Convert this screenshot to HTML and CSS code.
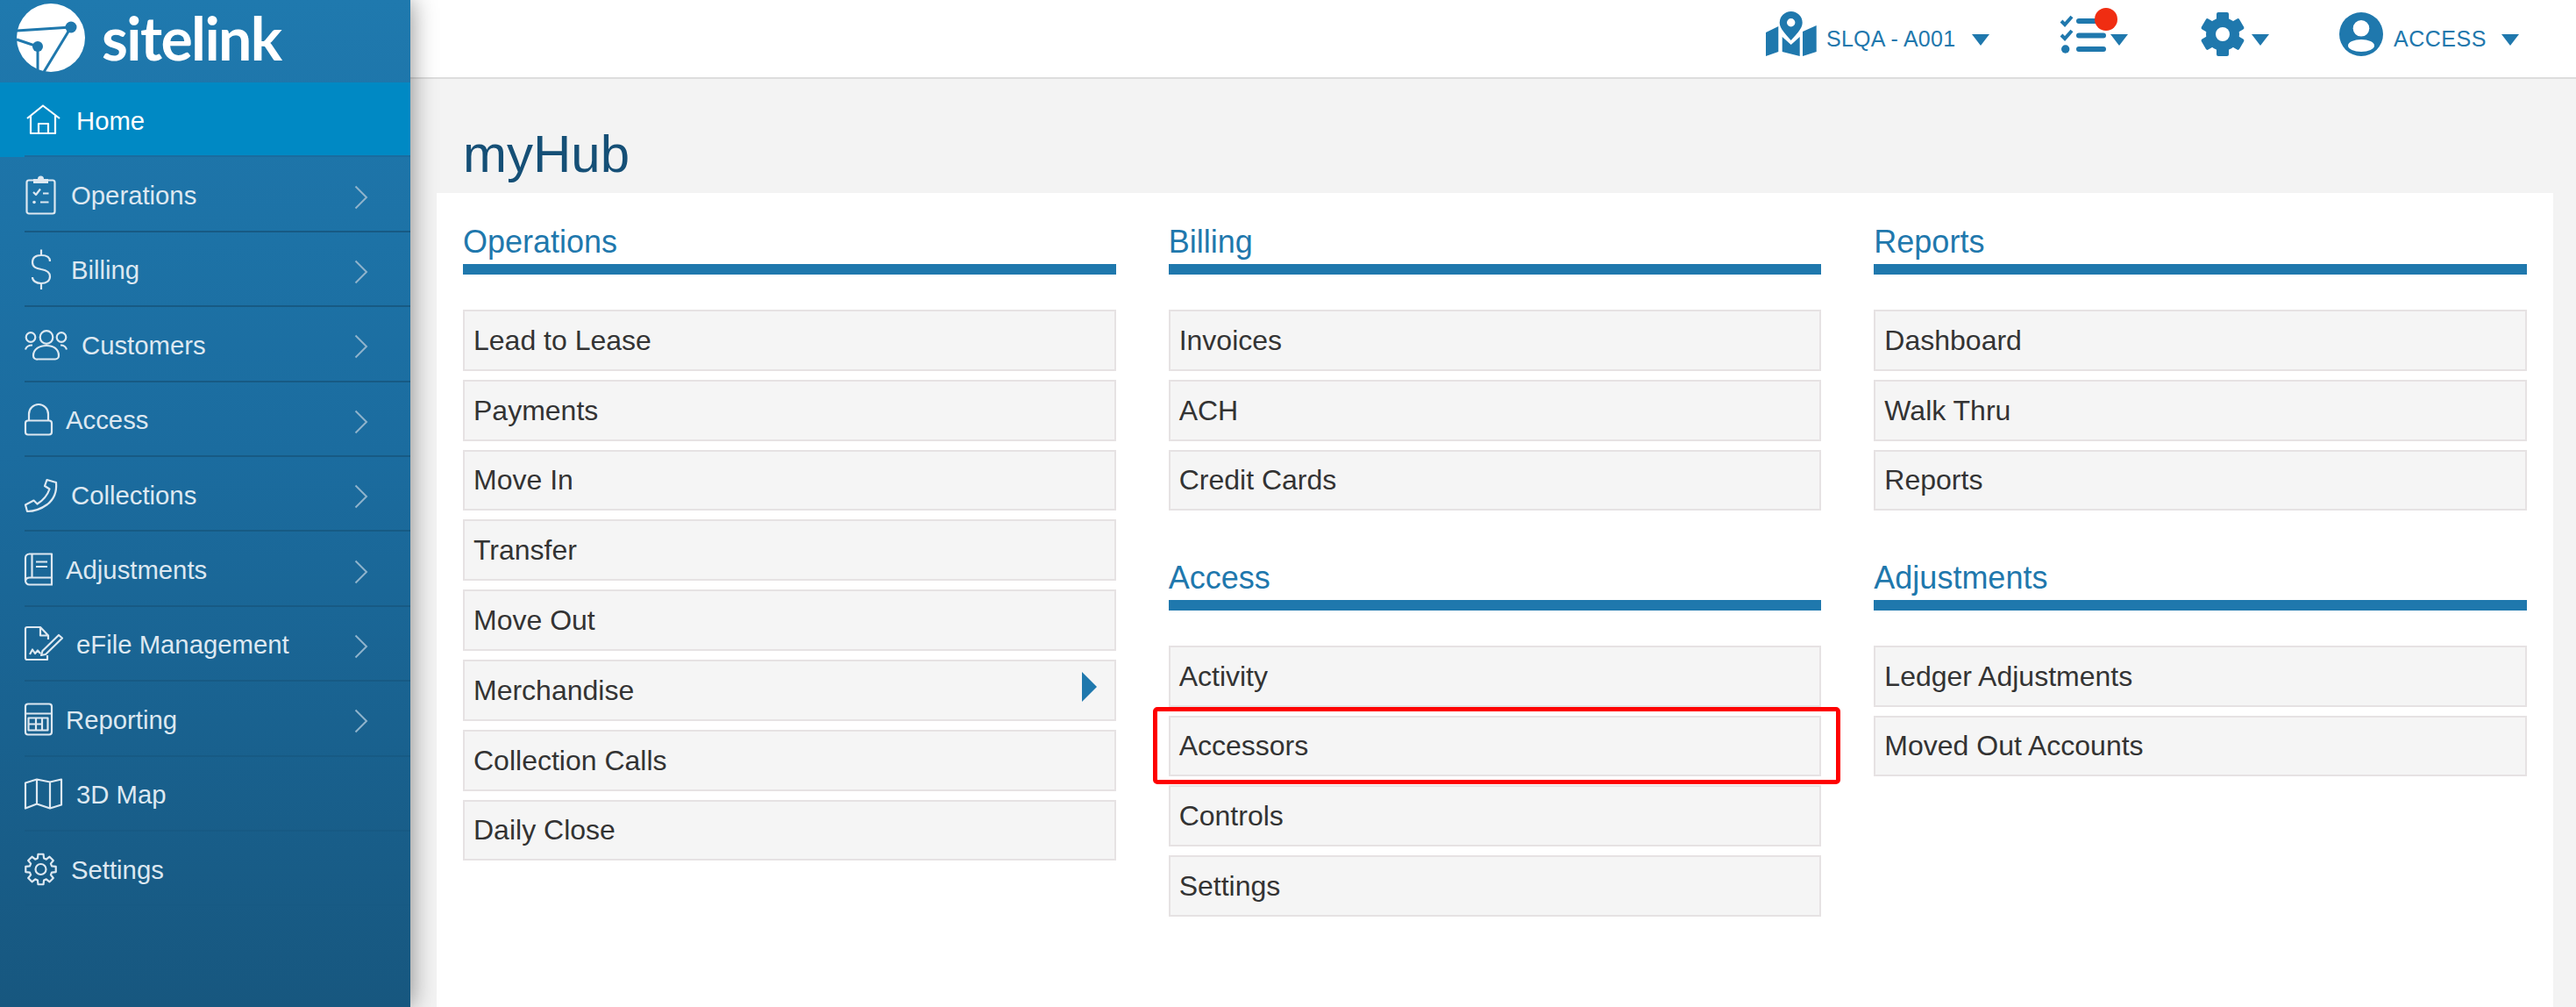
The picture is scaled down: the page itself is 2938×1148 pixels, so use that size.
FILE: index.html
```html
<!DOCTYPE html>
<html lang="en">
<head>
<meta charset="utf-8">
<title>myHub</title>
<link rel="stylesheet" href="styles.css">
</head>
<body>
<div class="app">
  <aside class="sidebar">
    <div class="brand">
      <svg class="brand-mark" width="80" height="80" viewBox="0 0 80 80">
        <circle cx="40" cy="40" r="39" fill="#fff"/>
        <path d="M1 32 L63 28 M63 28 L32 79 M1 42 L25 50 L25 77" fill="none" stroke="#1f78ad" stroke-width="3"/>
        <circle cx="63" cy="28" r="6.5" fill="#1f78ad"/>
        <circle cx="25" cy="50" r="6" fill="#1f78ad"/>
      </svg>
      <span class="brand-name">sitelink</span>
    </div>
    <ul class="nav">
      <li class="nav-item active"><a class="nav-link">
        <span class="nav-icon w59"><svg width="44" height="50" viewBox="0 0 44 50"><path d="M3 24 L21 9.5 L40 24 M7 21 V41 H35 V21 M16 41 V30 H27 V41"/></svg></span>
        <span class="nav-label">Home</span></a></li>
      <li class="nav-item"><a class="nav-link">
        <span class="nav-icon w53"><svg width="40" height="50" viewBox="0 0 40 50"><rect x="2.5" y="9.5" width="32" height="38" rx="2.5"/><path class="solid" d="M10 8 H15 A3.5 3.5 0 0 1 22 8 H27 V13 H10 Z"/><path d="M10 23 L13 26 L18 19.5 M21 24.5 H27.5 M18 34.5 H27.5"/><circle class="solid" cx="11" cy="34.5" r="1.8"/></svg></span>
        <span class="nav-label">Operations</span><svg class="chev" width="16" height="28" viewBox="0 0 16 28"><path d="M1.5 1.5 L14 14 L1.5 26.5"/></svg></a></li>
      <li class="nav-item"><a class="nav-link">
        <span class="nav-icon w53"><svg width="40" height="54" viewBox="0 0 40 54"><path d="M29 19 C29 14 25 12 19 12 C12 12 9 15 9 20 C9 26 14 27 19 28 C25 29 29 31 29 36 C29 41 25 44 19 44 C13 44 9 41 9 37 M19 5.5 V12 M19 44 V51"/></svg></span>
        <span class="nav-label">Billing</span><svg class="chev" width="16" height="28" viewBox="0 0 16 28"><path d="M1.5 1.5 L14 14 L1.5 26.5"/></svg></a></li>
      <li class="nav-item"><a class="nav-link">
        <span class="nav-icon w65"><svg width="50" height="50" viewBox="0 0 50 50"><circle cx="7" cy="17.5" r="5.3"/><circle cx="25" cy="17.5" r="7.3"/><circle cx="42" cy="17.5" r="5.3"/><path d="M15 42.5 H35 A4 4 0 0 0 39 38.5 C39 31 33 27 25 27 C17 27 10 31 10 38.5 A4 4 0 0 0 15 42.5 Z M1 31.5 C2 28 5 26.5 9 26.5 M48 31.5 C47 28 44 26.5 41 26.5"/></svg></span>
        <span class="nav-label">Customers</span><svg class="chev" width="16" height="28" viewBox="0 0 16 28"><path d="M1.5 1.5 L14 14 L1.5 26.5"/></svg></a></li>
      <li class="nav-item"><a class="nav-link">
        <span class="nav-icon w47"><svg width="34" height="50" viewBox="0 0 34 50"><rect x="1" y="27.5" width="30" height="16" rx="3"/><path d="M5 27 V20 A11 11 0 0 1 27 20 V27"/></svg></span>
        <span class="nav-label">Access</span><svg class="chev" width="16" height="28" viewBox="0 0 16 28"><path d="M1.5 1.5 L14 14 L1.5 26.5"/></svg></a></li>
      <li class="nav-item"><a class="nav-link">
        <span class="nav-icon w53"><svg width="40" height="50" viewBox="0 0 40 50"><path d="M25.5 9 L36 12 Q37.5 28 26 37 Q15 45 3 45 L1 37.5 L10.5 32.5 L14.5 36.5 Q25 30 28.5 19.5 L23 16 Z"/></svg></span>
        <span class="nav-label">Collections</span><svg class="chev" width="16" height="28" viewBox="0 0 16 28"><path d="M1.5 1.5 L14 14 L1.5 26.5"/></svg></a></li>
      <li class="nav-item"><a class="nav-link">
        <span class="nav-icon w47"><svg width="34" height="50" viewBox="0 0 34 50"><path d="M32 43.5 H5.5 A4.5 4.5 0 0 1 1 39 V13 A4.5 4.5 0 0 1 5.5 8.5 H31 V35.5 H5.5 A4.5 4.5 0 0 0 1 39 M8.5 8.5 V35.5 M13 17.5 H26 M13 23 H26 M31 35.5 V43"/></svg></span>
        <span class="nav-label">Adjustments</span><svg class="chev" width="16" height="28" viewBox="0 0 16 28"><path d="M1.5 1.5 L14 14 L1.5 26.5"/></svg></a></li>
      <li class="nav-item"><a class="nav-link">
        <span class="nav-icon w59"><svg width="46" height="50" viewBox="0 0 46 50"><path d="M26 39 V44 H3 A2 2 0 0 1 1 42 V9 A2 2 0 0 1 3 7 H18 L27 16.5 V21 M18 7 V16.5 H27 M39 16 L43 19.5 L24 38 L19 39 L20.5 34 Z M6 38 L9 32.5 L12 37 L15 33.5 L18 37"/></svg></span>
        <span class="nav-label">eFile Management</span><svg class="chev" width="16" height="28" viewBox="0 0 16 28"><path d="M1.5 1.5 L14 14 L1.5 26.5"/></svg></a></li>
      <li class="nav-item"><a class="nav-link">
        <span class="nav-icon w47"><svg width="34" height="50" viewBox="0 0 34 50"><rect x="1" y="8.5" width="30" height="35" rx="3"/><path d="M1 19.5 H31 M4.5 24.5 H26.5 V38.5 H4.5 Z M13 24.5 V38.5 M20 24.5 V38.5 M4.5 31.5 H20"/></svg></span>
        <span class="nav-label">Reporting</span><svg class="chev" width="16" height="28" viewBox="0 0 16 28"><path d="M1.5 1.5 L14 14 L1.5 26.5"/></svg></a></li>
      <li class="nav-item"><a class="nav-link">
        <span class="nav-icon w59"><svg width="46" height="50" viewBox="0 0 46 50"><path d="M1 13.5 L14 9.5 L29 12.5 L42 9.5 V38.5 L29 42.5 L14 37.5 L1 42.5 Z M14 9.5 V37.5 M29 12.5 V42.5"/></svg></span>
        <span class="nav-label">3D Map</span></a></li>
      <li class="nav-item"><a class="nav-link">
        <span class="nav-icon w53"><svg width="40" height="50" viewBox="0 0 40 50"><g transform="translate(18.5 26)"><polygon points="-3.58,-12.5 -3.04,-17.23 3.04,-17.23 3.58,-12.5 6.31,-11.37 10.03,-14.33 14.33,-10.03 11.37,-6.31 12.5,-3.58 17.23,-3.04 17.23,3.04 12.5,3.58 11.37,6.31 14.33,10.03 10.03,14.33 6.31,11.37 3.58,12.5 3.04,17.23 -3.04,17.23 -3.58,12.5 -6.31,11.37 -10.03,14.33 -14.33,10.03 -11.37,6.31 -12.5,3.58 -17.23,3.04 -17.23,-3.04 -12.5,-3.58 -11.37,-6.31 -14.33,-10.03 -10.03,-14.33 -6.31,-11.37"/><circle r="6"/></g></svg></span>
        <span class="nav-label">Settings</span></a></li>
    </ul>
  </aside>

  <div class="content">
    <header class="topbar">
      <div class="top-item">
        <svg class="top-icon" width="58" height="52" viewBox="0 0 58 52">
          <path d="M28.7 0 A13 13 0 0 1 41.7 13 C41.7 20 33 28 28.7 33 C24.4 28 15.7 20 15.7 13 A13 13 0 0 1 28.7 0 Z M28.7 8 A4.7 4.7 0 1 0 28.7 17.4 A4.7 4.7 0 1 0 28.7 8 Z" fill-rule="evenodd"/>
          <path d="M0 24 L14.3 17 V46 L0 51 Z M18.7 29 L28.7 38 L38.7 29 V51 L18.7 46 Z M42 23 L57.7 16 V46 L42 51 Z"/>
        </svg>
        <span class="top-label top-site">SLQA - A001</span>
        <span class="caret caret-site"></span>
      </div>
      <div class="top-item task-item">
        <svg class="task-icon" width="53" height="52" viewBox="0 0 53 52">
          <path class="tick" d="M2 11 L6 15 L14 6 M2 27 L6 31 L14 22"/>
          <path class="task-line" d="M22 11 H50 M22 27.5 H50 M22 43 H50"/>
          <circle cx="6.7" cy="43" r="4.7"/>
        </svg>
        <span class="badge"></span>
        <span class="caret"></span>
      </div>
      <div class="top-item">
        <svg class="top-icon" width="48" height="50" viewBox="0 0 48 50">
          <g transform="translate(24 25)">
            <circle r="19"/>
            <rect x="-7" y="-25" width="14" height="12" rx="2"/>
            <rect x="-7" y="-25" width="14" height="12" rx="2" transform="rotate(60)"/>
            <rect x="-7" y="-25" width="14" height="12" rx="2" transform="rotate(120)"/>
            <rect x="-7" y="-25" width="14" height="12" rx="2" transform="rotate(180)"/>
            <rect x="-7" y="-25" width="14" height="12" rx="2" transform="rotate(240)"/>
            <rect x="-7" y="-25" width="14" height="12" rx="2" transform="rotate(300)"/>
            <circle r="8" class="knock"/>
          </g>
        </svg>
        <span class="caret caret-near"></span>
      </div>
      <div class="top-item">
        <svg class="top-icon" width="50" height="50" viewBox="0 0 50 50">
          <circle cx="25" cy="25" r="25"/>
          <circle cx="25" cy="18.3" r="9.3" class="knock"/>
          <ellipse cx="25" cy="38" rx="15" ry="7" class="knock"/>
        </svg>
        <span class="top-label top-user">ACCESS</span>
        <span class="caret caret-user"></span>
      </div>
    </header>

    <main class="main">
      <h1 class="page-title">myHub</h1>
      <div class="panel">
        <div class="col">
          <section class="section">
            <h2 class="section-title">Operations</h2>
            <ul class="links">
              <li class="link">Lead to Lease</li>
              <li class="link">Payments</li>
              <li class="link">Move In</li>
              <li class="link">Transfer</li>
              <li class="link">Move Out</li>
              <li class="link has-sub">Merchandise<span class="sub-arrow"></span></li>
              <li class="link">Collection Calls</li>
              <li class="link">Daily Close</li>
            </ul>
          </section>
        </div>
        <div class="col">
          <section class="section">
            <h2 class="section-title">Billing</h2>
            <ul class="links">
              <li class="link">Invoices</li>
              <li class="link">ACH</li>
              <li class="link">Credit Cards</li>
            </ul>
          </section>
          <section class="section">
            <h2 class="section-title">Access</h2>
            <ul class="links">
              <li class="link">Activity</li>
              <li class="link highlighted">Accessors</li>
              <li class="link">Controls</li>
              <li class="link">Settings</li>
            </ul>
          </section>
        </div>
        <div class="col">
          <section class="section">
            <h2 class="section-title">Reports</h2>
            <ul class="links">
              <li class="link">Dashboard</li>
              <li class="link">Walk Thru</li>
              <li class="link">Reports</li>
            </ul>
          </section>
          <section class="section">
            <h2 class="section-title">Adjustments</h2>
            <ul class="links">
              <li class="link">Ledger Adjustments</li>
              <li class="link">Moved Out Accounts</li>
            </ul>
          </section>
        </div>
      </div>
    </main>
  </div>
</div>
</body>
</html>
```

FILE: styles.css
```css
* { box-sizing: border-box; }
html, body { margin: 0; height: 100%; }
body {
  font-family: "Liberation Sans", Arial, sans-serif;
  background: #f3f3f3;
  color: #333;
  overflow: hidden;
}
ul { list-style: none; margin: 0; padding: 0; }

.app { display: flex; height: 100vh; }

/* Sidebar */
.sidebar {
  flex: 0 0 468px;
  position: relative;
  z-index: 2;
  background: linear-gradient(180deg, #1f79ae 0%, #1b6c9f 45%, #17577f 100%);
  box-shadow: 2px 0 26px rgba(0, 0, 0, 0.42);
}
.brand {
  height: 94px;
  display: flex;
  align-items: flex-start;
  padding: 3px 0 0 18px;
}
.brand-name {
  margin: -3px 0 0 18px;
  font-family: Lato, sans-serif;
  font-weight: 700;
  font-size: 68px;
  line-height: 86px;
  letter-spacing: -1.6px;
  color: #fff;
}
.nav-item { height: 85.4px; }
.nav-item.active { background: #0089c4; }
.nav-link {
  display: flex;
  align-items: center;
  height: 100%;
  margin-left: 28px;
  border-bottom: 2px solid #175a84;
  font-size: 29.3px;
  color: #dde8f1;
}
.nav-label { padding-top: 4px; }
.active .nav-link { color: #fff; border-bottom-color: #1a6c9f; }
.nav-icon { display: flex; align-items: center; flex: none; }
.nav-icon svg { fill: none; stroke: #dde8f1; stroke-width: 2.2; stroke-linejoin: round; overflow: visible; }
.active .nav-icon svg { stroke: #fff; }
.nav-icon .solid { fill: #dde8f1; stroke: none; }
.w47 { width: 47px; }
.w53 { width: 53px; }
.w59 { width: 59px; }
.w65 { width: 65px; }
.chev {
  margin: 7px 48px 0 auto;
  fill: none;
  stroke: #8fb3cc;
  stroke-width: 2;
}

/* Top bar */
.content { flex: 1; min-width: 0; display: flex; flex-direction: column; }
.topbar {
  height: 90px;
  flex: none;
  background: #fff;
  border-bottom: 2px solid #dddddd;
  display: flex;
  justify-content: flex-end;
  align-items: center;
  gap: 80px;
  padding-right: 65px;
  color: #1f78ad;
}
.top-item { display: flex; align-items: center; position: relative; }
.top-icon { fill: #1f78ad; margin-bottom: 10px; overflow: visible; }
.top-icon .knock { fill: #fff; }
.top-label { font-size: 25px; }
.top-site { margin-left: 11px; width: 146px; letter-spacing: 0.25px; white-space: nowrap; }
.top-user { margin-left: 12px; width: 105px; letter-spacing: 0.5px; white-space: nowrap; }
.task-item { margin-right: 4px; }
.caret {
  width: 0;
  height: 0;
  border-left: 10.5px solid transparent;
  border-right: 10.5px solid transparent;
  border-top: 13px solid #1f78ad;
  margin-top: 3px;
  margin-left: 5px;
}
.caret-site { margin-left: 20px; }
.caret-user { margin-left: 18px; }
.caret-near { margin-left: 9px; }
.task-icon { fill: #1f78ad; margin-bottom: 10px; overflow: visible; }
.tick { fill: none; stroke: #1f78ad; stroke-width: 4; }
.task-line { fill: none; stroke: #1f78ad; stroke-width: 6; stroke-linecap: round; }
.badge {
  position: absolute;
  top: -4px;
  left: 40px;
  width: 26px;
  height: 26px;
  border-radius: 50%;
  background: #f02d12;
}

/* Main */
.main { flex: 1; display: flex; flex-direction: column; padding: 0 26px 0 30px; min-height: 0; }
.page-title {
  margin: 0;
  padding: 51px 0 9px 30px;
  font-size: 60px;
  line-height: 70px;
  font-weight: 400;
  color: #154f76;
}
.panel {
  flex: 1;
  background: #fff;
  padding: 34px 30px 0;
  display: grid;
  grid-template-columns: repeat(3, 1fr);
  column-gap: 60px;
  align-items: start;
}
.section + .section { margin-top: 54.4px; }
.section-title {
  margin: 0 0 40px;
  font-size: 36px;
  line-height: 40px;
  font-weight: 400;
  color: #1f78ad;
  padding: 2px 0 5px;
  border-bottom: 12px solid #1f78ad;
}
.links { display: flex; flex-direction: column; gap: 10px; }
.link {
  height: 69.8px;
  display: flex;
  align-items: center;
  padding: 1px 0 0 10px;
  background: #f5f5f5;
  border: 2px solid #e6e2e3;
  font-size: 32px;
  color: #333;
}
.has-sub { justify-content: space-between; padding-right: 20px; }
.sub-arrow {
  width: 0;
  height: 0;
  margin-top: -9px;
  border-top: 17px solid transparent;
  border-bottom: 17px solid transparent;
  border-left: 17px solid #1f78ad;
}
.highlighted { position: relative; }
.highlighted::after {
  content: "";
  position: absolute;
  top: -12px;
  right: -24px;
  bottom: -11px;
  left: -20px;
  border: 5px solid #fe0000;
  border-radius: 5px;
}
```
